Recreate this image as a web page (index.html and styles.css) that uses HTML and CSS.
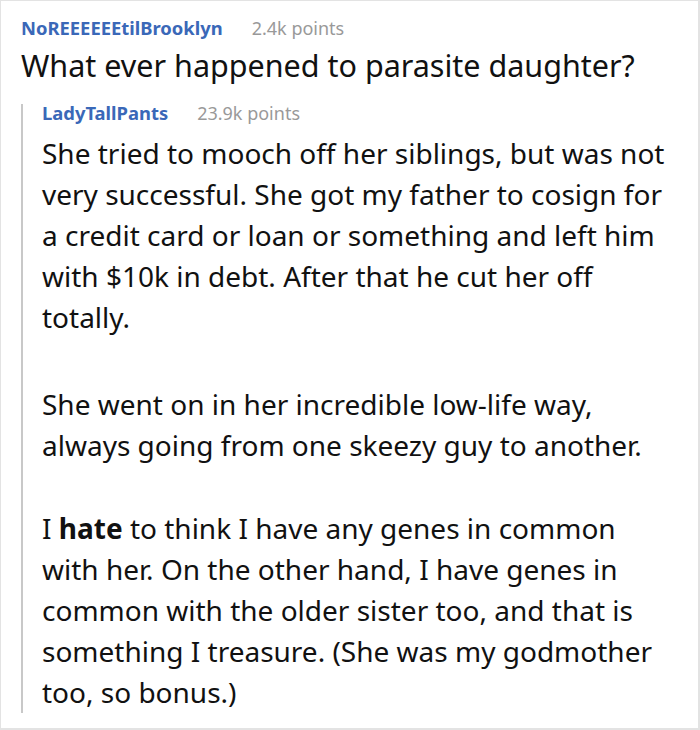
FILE: index.html
```html
<!DOCTYPE html>
<html>
<head>
<meta charset="utf-8">
<link rel="stylesheet" href="styles.css">
</head>
<body>
<div class="frame">
  <div class="comment">
    <div class="meta"><span class="user">NoREEEEEEtilBrooklyn</span><span class="points">2.4k points</span></div>
    <p class="title">What ever happened to parasite daughter?</p>
    <div class="reply">
      <div class="meta"><span class="user">LadyTallPants</span><span class="points">23.9k points</span></div>
      <div class="body">
        <p class="text">She tried to mooch off her siblings, but was not very successful. She got my father to cosign for a credit card or loan or something and left him with $10k in debt. After that he cut her off totally.</p>
        <p class="text second">She went on in her incredible low-life way, always going from one skeezy guy to another.</p>
        <p class="text third">I <b>hate</b> to think I have any genes in common with her. On the other hand, I have genes in common with the older sister too, and that is something I treasure. (She was my godmother too, so bonus.)</p>
      </div>
    </div>
  </div>
</div>
</body>
</html>
```
FILE: styles.css
```css
html, body {
  margin: 0;
  padding: 0;
  background: #fff;
}
.frame {
  width: 700px;
  height: 730px;
  box-sizing: border-box;
  border: 1px solid #e3e3e3;
  border-right-width: 2px;
  border-bottom-width: 2px;
  font-family: "Noto Sans", sans-serif;
  color: #111;
  padding: 18px 31px 0 20px;
}
.meta {
  display: flex;
  align-items: baseline;
  gap: 29px;
  font-size: 18.4px;
  line-height: 18px;
}
.user {
  font-weight: bold;
  color: #3a68b8;
}
.points {
  color: #999;
  font-size: 18px;
}
.title {
  margin: 8px 0 18px;
  font-size: 30.5px;
  line-height: 41px;
}
.reply {
  border-left: 2px solid #c8c8c8;
  padding-left: 19px;
}
.body {
  margin-top: 11px;
  margin-bottom: -7px;
}
.text {
  margin: 0;
  font-size: 28px;
  line-height: 41px;
}
.text.second {
  margin-top: 46px;
}
.text.third {
  margin-top: 42px;
}
.text b {
  font-weight: bold;
}
```
